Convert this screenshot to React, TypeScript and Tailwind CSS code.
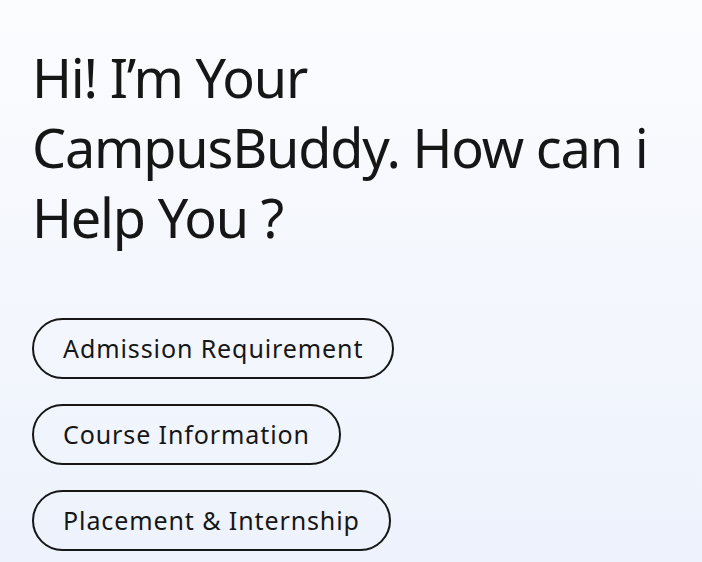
const suggestions = [
  "Admission Requirement",
  "Course Information",
  "Placement & Internship",
];

export default function App() {
  return (
    <div
      className="min-h-[562px] w-full bg-gradient-to-b from-[#fbfcfe] to-[#edf2fc] px-[32px] pt-[42px] text-[#161616]"
      style={{ fontFamily: '"Noto Sans", "Open Sans", sans-serif' }}
    >
      <h1 className="text-[54px] font-normal leading-[70px] tracking-[-1.2px]">
        Hi! I’m Your CampusBuddy. How can i Help You ?
      </h1>
      <div className="mt-[66px] flex flex-col items-start gap-[25px]">
        {suggestions.map((s) => (
          <button
            key={s}
            className="h-[61px] rounded-full border-2 border-[#161616] px-[29px] text-[25px] leading-none tracking-[0.9px] text-[#161616]"
          >
            {s}
          </button>
        ))}
      </div>
    </div>
  );
}
